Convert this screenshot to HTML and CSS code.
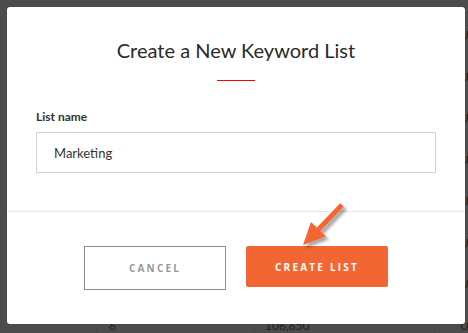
FILE: index.html
```html
<!DOCTYPE html>
<html>
<head>
  <title>Create a New Keyword List</title>
  <link rel="stylesheet" href="styles.css">
</head>
<body>
  <div class="table">
    <div class="row"><span></span><span></span><span></span><span>US$</span></div>
    <div class="row"><span></span><span></span><span></span><span>US$</span></div>
    <div class="row"><span></span><span></span><span></span><span>US$</span></div>
    <div class="row"><span></span><span></span><span></span><span>US$</span></div>
    <div class="row"><span></span><span></span><span></span><span>US$</span></div>
    <div class="row"><span></span><span></span><span></span><span>US$</span></div>
    <div class="row"><span></span><span></span><span></span><span>US$</span></div>
    <div class="row"><span></span><span>6</span><span>106,650</span><span>US$</span></div>
  </div>

  <div class="modal">
    <div class="modal-head">
      <h1 class="modal-title">Create a New Keyword List</h1>
      <div class="title-rule"></div>
    </div>
    <div class="modal-body">
      <label class="field-label" for="listName">List name</label>
      <input class="field-input" id="listName" type="text" value="Marketing">
    </div>
    <div class="modal-foot">
      <button class="btn btn-cancel">CANCEL</button>
      <button class="btn btn-create">CREATE LIST</button>
    </div>
  </div>

  <svg class="pointer" viewBox="290 195 65 60" width="65" height="60">
    <defs>
      <filter id="shade" x="-30%" y="-30%" width="160%" height="160%">
        <feDropShadow dx="3" dy="3" stdDeviation="1.6" flood-color="#000" flood-opacity="0.35"/>
      </filter>
    </defs>
    <g filter="url(#shade)" fill="#f26633">
      <line x1="342" y1="205" x2="318" y2="230" stroke="#f26633" stroke-width="5"/>
      <polygon points="303,245 311,222 326,236.5"/>
    </g>
  </svg>
</body>
</html>
```

FILE: styles.css
```css
body {
  margin: 0;
  width: 468px;
  height: 333px;
  overflow: hidden;
  background: #4b4c4b;
  font-family: Lato, "Open Sans", sans-serif;
  position: relative;
}

.table {
  width: 468px;
  overflow: hidden;
  padding-top: 14px;
}

.row {
  display: grid;
  grid-template-columns: 97px 158px 180px 33px;
  height: 41.5px;
  font-size: 12px;
  color: #1e1f1e;
}

.row span {
  display: flex;
  align-items: center;
  border-right: 1px solid #454645;
  white-space: nowrap;
  overflow: hidden;
}

.row span:nth-child(2) {
  padding-left: 12px;
}

.row span:nth-child(3) {
  padding-left: 10px;
}

.row span:nth-child(4) {
  padding-left: 25px;
  border-right: none;
}

.modal {
  position: absolute;
  left: 7px;
  top: 7px;
  width: 458px;
  height: 317px;
  background: #fff;
  border-radius: 3px;
  display: flex;
  flex-direction: column;
}

.modal-head {
  padding-top: 31px;
  display: flex;
  flex-direction: column;
  align-items: center;
}

.modal-title {
  margin: 0;
  font-size: 20px;
  line-height: 24px;
  font-weight: 400;
  color: #2a2a2a;
}

.title-rule {
  width: 38px;
  height: 1px;
  margin-top: 18px;
  background: #f00;
}

.modal-body {
  padding: 28px 29px 0;
  display: flex;
  flex-direction: column;
}

.field-label {
  font-size: 12px;
  line-height: 15px;
  font-weight: 700;
  color: #333;
}

.field-input {
  margin-top: 8px;
  height: 41px;
  box-sizing: border-box;
  border: 1px solid #ccd3d8;
  padding: 0 17px;
  font-family: inherit;
  font-size: 13px;
  color: #333;
  outline: none;
}

.modal-foot {
  margin-top: 38px;
  border-top: 1px solid #e6e6e6;
  padding-top: 34px;
  display: flex;
  justify-content: center;
  align-items: flex-start;
  gap: 20px;
}

.btn {
  width: 142px;
  font-family: "Open Sans", sans-serif;
  font-size: 10px;
  font-weight: 700;
  letter-spacing: 2.2px;
  cursor: pointer;
  box-sizing: border-box;
}

.btn-cancel {
  height: 44px;
  background: #fff;
  border: 1px solid #8e8e8e;
  color: #999;
}

.btn-create {
  height: 41px;
  background: #f26633;
  border: none;
  border-radius: 2px;
  color: #fff;
}

.pointer {
  position: absolute;
  left: 290px;
  top: 195px;
}
```
